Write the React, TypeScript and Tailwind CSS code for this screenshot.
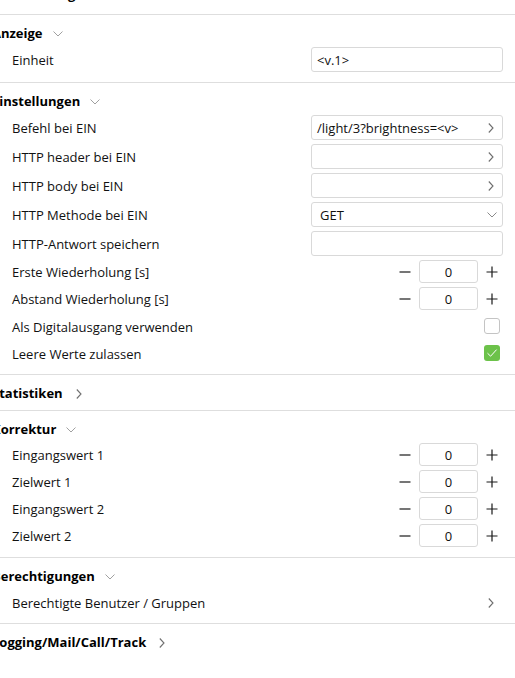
import React from "react";

const ChevDown = ({ c = "#a0a0a0" }: { c?: string }) => (
  <svg width="10" height="6" viewBox="0 0 10 6" className="block">
    <path d="M0.5 0.5 L5 5 L9.5 0.5" fill="none" stroke={c} strokeWidth="1" />
  </svg>
);

const ChevRight = ({ c = "#6e6e6e" }: { c?: string }) => (
  <svg width="6" height="10" viewBox="0 0 6 10" className="block">
    <path d="M0.8 0.5 L5 5 L0.8 9.5" fill="none" stroke={c} strokeWidth="1.1" />
  </svg>
);

const Heading = ({ title, open }: { title: string; open: boolean }) => (
  <div className="h-[28px] flex items-center -ml-[8px] font-bold text-[13px] text-black">
    <span className="pt-[2px]">{title}</span>
    {open ? (
      <span className="ml-[10px] w-[10px] flex justify-center pt-[1px]">
        <ChevDown />
      </span>
    ) : (
      <span className="ml-[13px] w-[6px] flex justify-center pt-[1px]">
        <ChevRight c="#707070" />
      </span>
    )}
  </div>
);

const InputRow = ({
  label,
  value,
  chevron,
  select,
}: {
  label: string;
  value?: string;
  chevron?: boolean;
  select?: boolean;
}) => (
  <div className="h-[29px] flex items-start justify-between px-3">
    <div className="h-[25px] flex items-center pt-[3px]">{label}</div>
    <div
      className={
        "w-[192px] h-[25px] border border-[#d9d9d9] rounded-[3px] flex items-center justify-between bg-white " +
        (select ? "pl-[8px] pr-[5px]" : "pl-[5px] pr-[8px]")
      }
    >
      <span className="whitespace-nowrap pt-[3px]">{value ?? ""}</span>
      {chevron && <ChevRight />}
      {select && <ChevDown c="#8a8a8a" />}
    </div>
  </div>
);

const Minus = () => (
  <svg width="12" height="12" viewBox="0 0 12 12" className="block">
    <path d="M0.5 6 L11.5 6" stroke="#1a1a1a" strokeWidth="1.2" />
  </svg>
);
const Plus = () => (
  <svg width="12" height="12" viewBox="0 0 12 12" className="block">
    <path d="M0.5 6 L11.5 6 M6 0.5 L6 11.5" stroke="#1a1a1a" strokeWidth="1.2" />
  </svg>
);

const NumberRow = ({ label }: { label: string }) => (
  <div className="h-[27px] flex items-start justify-between px-3">
    <div className="h-[23px] flex items-center pt-[3px]">{label}</div>
    <div className="flex items-center gap-[3px]">
      <div className="w-[22px] h-[23px] flex items-center justify-center">
        <Minus />
      </div>
      <div className="w-[59px] h-[23px] border border-[#d9d9d9] rounded-[3px] flex items-center justify-center pt-[3px]">
        0
      </div>
      <div className="w-[22px] h-[23px] flex items-center justify-center">
        <Plus />
      </div>
    </div>
  </div>
);

const CheckRow = ({ label, checked }: { label: string; checked?: boolean }) => (
  <div className="h-[27px] flex items-start justify-between px-3">
    <div className="h-[24px] flex items-center pt-[3px]">{label}</div>
    {checked ? (
      <div className="mt-[4px] mr-[3px] w-[16px] h-[16px] rounded-[3px] bg-[#6cc24a] flex items-center justify-center">
        <svg width="16" height="16" viewBox="0 0 16 16" className="block">
          <path d="M3.5 8.2 L6.6 11.2 L12.6 4.6" fill="none" stroke="#ffffff" strokeWidth="1" />
        </svg>
      </div>
    ) : (
      <div className="mt-[4px] mr-[3px] w-[16px] h-[16px] rounded-[3px] border border-[#c4c4c4] bg-white" />
    )}
  </div>
);

export default function App() {
  return (
    <div className="w-[515px] h-[678px] overflow-hidden bg-white text-[13px] text-[#111111] font-['Open_Sans','Noto_Sans',sans-serif]">
      <div className="h-[14px] overflow-hidden flex items-end">
        <div className="leading-[40px] font-bold text-black whitespace-nowrap">
          Verbindung
        </div>
      </div>

      <section className="border-t border-[#dedede] pt-[4px] pb-[6px]">
        <Heading title="Anzeige" open />
        <InputRow label="Einheit" value="<v.1>" />
      </section>

      <section className="border-t border-[#dedede] pt-[4px] pb-[6px]">
        <Heading title="Einstellungen" open />
        <InputRow label="Befehl bei EIN" value="/light/3?brightness=<v>" chevron />
        <InputRow label="HTTP header bei EIN" chevron />
        <InputRow label="HTTP body bei EIN" chevron />
        <InputRow label="HTTP Methode bei EIN" value="GET" select />
        <InputRow label="HTTP-Antwort speichern" />
        <NumberRow label="Erste Wiederholung [s]" />
        <NumberRow label="Abstand Wiederholung [s]" />
        <CheckRow label="Als Digitalausgang verwenden" />
        <CheckRow label="Leere Werte zulassen" checked />
      </section>

      <section className="border-t border-[#dedede] pt-[4px] pb-[3px]">
        <Heading title="Statistiken" open={false} />
      </section>

      <section className="border-t border-[#dedede] pt-[4px] pb-[6px]">
        <Heading title="Korrektur" open />
        <NumberRow label="Eingangswert 1" />
        <NumberRow label="Zielwert 1" />
        <NumberRow label="Eingangswert 2" />
        <NumberRow label="Zielwert 2" />
      </section>

      <section className="border-t border-[#dedede] pt-[4px] pb-[4px]">
        <Heading title="Berechtigungen" open />
        <div className="h-[29px] flex items-start justify-between px-3">
          <div className="h-[25px] flex items-center pt-[3px]">Berechtigte Benutzer / Gruppen</div>
          <div className="h-[25px] flex items-center pr-[9px]">
            <ChevRight />
          </div>
        </div>
      </section>

      <section className="border-t border-[#dedede] pt-[4px] pb-[3px]">
        <Heading title="Logging/Mail/Call/Track" open={false} />
      </section>
    </div>
  );
}
